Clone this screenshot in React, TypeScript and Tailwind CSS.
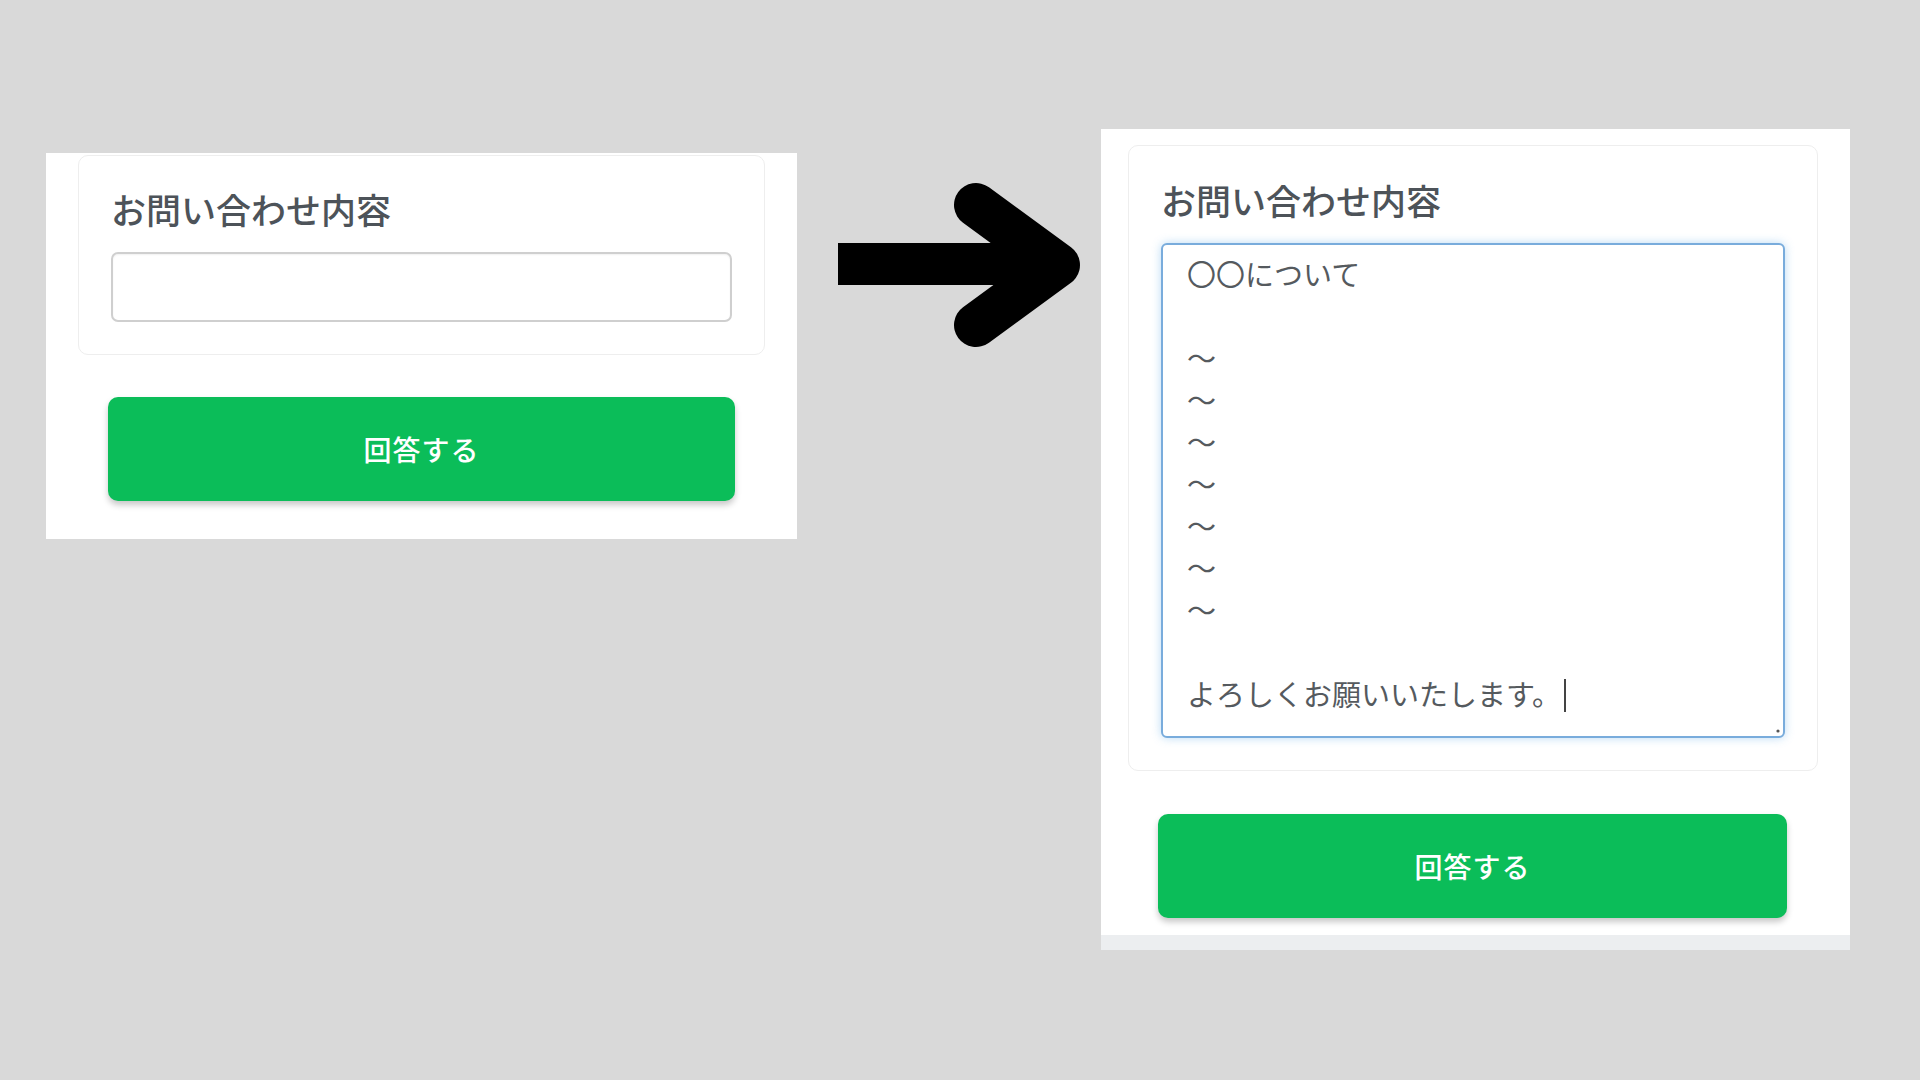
const jp = { fontFamily: '"Noto Sans CJK JP", "Noto Sans", sans-serif' };

const lines = ["〇〇について", "", "〜", "〜", "〜", "〜", "〜", "〜", "〜", "", "よろしくお願いいたします。"];

function Arrow() {
  return (
    <svg width="304" height="200" viewBox="0 0 304 200" className="mt-[160px] shrink-0">
      <rect x="41" y="83" width="200" height="42" fill="#000" />
      <polyline
        points="179,45 261,105 179,165"
        fill="none"
        stroke="#000"
        strokeWidth="44"
        strokeLinecap="round"
        strokeLinejoin="round"
      />
    </svg>
  );
}

function SubmitButton({ className }: { className: string }) {
  return (
    <button
      className={`h-[104px] rounded-[10px] bg-[#0bbd59] text-[28px] font-medium tracking-[1px] text-white shadow-[0_4px_6px_rgba(0,0,0,0.22)] ${className}`}
      style={jp}
    >
      回答する
    </button>
  );
}

function Title() {
  return (
    <h2 className="text-[35px] leading-[41px] font-medium text-[#4d5359]" style={jp}>
      お問い合わせ内容
    </h2>
  );
}

export default function App() {
  return (
    <div className="flex min-h-screen w-full items-start bg-[#d9d9d9] pl-[46px]">
      {/* before */}
      <section className="mt-[153px] flex w-[751px] shrink-0 flex-col bg-white pb-[38px]">
        <div className="mx-[32px] mt-[2px] rounded-[10px] border border-[#eeeeee] px-[32px] pt-[32px] pb-[32px]">
          <Title />
          <div className="mt-[23px] h-[70px] rounded-[7px] border-2 border-[#cfcfcf] bg-white shadow-[inset_0_1px_2px_rgba(0,0,0,0.06)]" />
        </div>
        <SubmitButton className="mx-[62px] mt-[42px]" />
      </section>

      <Arrow />

      {/* after */}
      <section className="mt-[129px] flex h-[821px] w-[749px] shrink-0 flex-col bg-white">
        <div className="mt-[16px] mr-[32px] ml-[27px] rounded-[10px] border border-[#eeeeee] px-[32px] pt-[33px] pb-[32px]">
          <Title />
          <div
            className="relative mt-[23px] h-[495px] rounded-[6px] border-2 border-[#79acdc] bg-white pt-[7px] pl-[24px] text-[29px] leading-[42px] text-[#555a5e] shadow-[0_0_10px_rgba(102,175,233,0.45)]"
            style={jp}
          >
            {lines.map((l, i) => (
              <div key={i} className="h-[42px] whitespace-pre">
                {l}
                {i === lines.length - 1 && (
                  <span className="ml-[3px] inline-block h-[33px] w-[2px] translate-y-[6px] bg-[#444]" />
                )}
              </div>
            ))}
            <svg width="6" height="6" viewBox="0 0 6 6" className="absolute right-[2px] bottom-[2px]">
              <circle cx="3" cy="3" r="1.6" fill="#555" />
            </svg>
          </div>
        </div>
        <SubmitButton className="mt-[43px] ml-[57px] w-[629px]" />
        <div className="mt-auto h-[15px] bg-[#eceef0]" />
      </section>
    </div>
  );
}
